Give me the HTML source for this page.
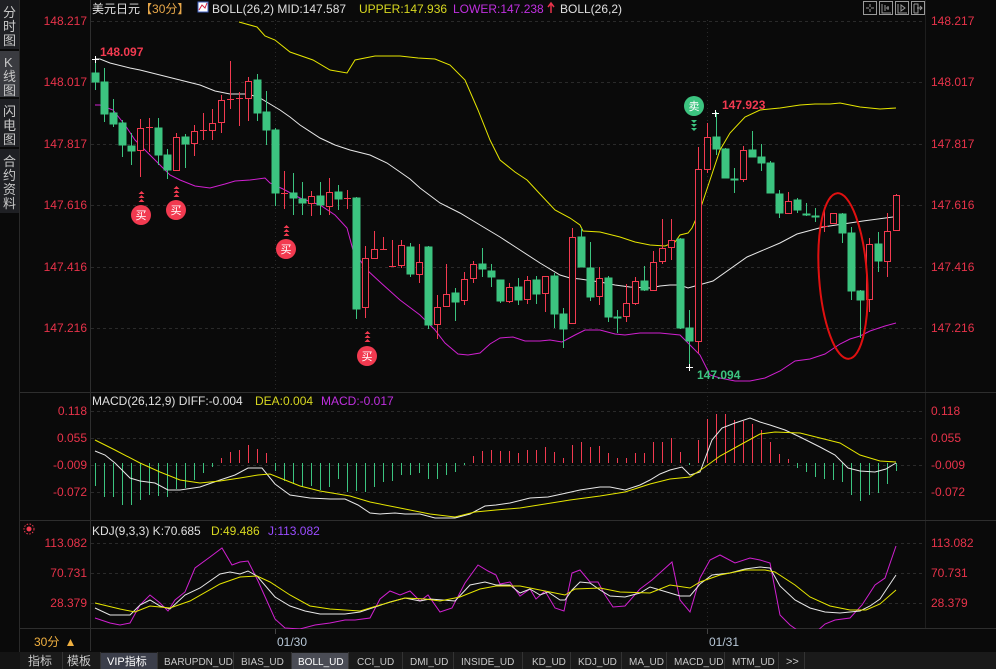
<!DOCTYPE html>
<html><head><meta charset="utf-8"><style>
html,body{margin:0;padding:0;background:#0a0a0a;width:996px;height:669px;overflow:hidden}
svg{display:block}
text{font-family:"Liberation Sans","Noto Sans CJK SC",sans-serif;font-size:12px}
.ax{fill:#e8334a}
.tab{fill:#c8c8c8;font-size:11px}
</style></head><body>
<svg width="996" height="669" viewBox="0 0 996 669" xmlns="http://www.w3.org/2000/svg">
<rect width="996" height="669" fill="#0a0a0a"/>
<!-- sidebar -->
<rect x="0" y="0" width="19" height="652" fill="#0a0a0a"/>
<rect x="0" y="0" width="19" height="49" fill="#1f2024"/>
<rect x="0" y="51" width="19" height="46" fill="#3a3b40"/>
<rect x="0" y="99" width="19" height="48" fill="#1f2024"/>
<rect x="0" y="149" width="19" height="64" fill="#1f2024"/>
<line x1="19.5" y1="0" x2="19.5" y2="652" stroke="#2a2a2a"/>
<g fill="#c8c8c8" font-size="13">
<text x="3" y="17" style="font-size:13px">分</text><text x="3" y="31" style="font-size:13px">时</text><text x="3" y="45" style="font-size:13px">图</text>
<text x="4" y="67" style="font-size:13px">K</text><text x="3" y="81" style="font-size:13px">线</text><text x="3" y="95" style="font-size:13px">图</text>
<text x="3" y="116" style="font-size:13px">闪</text><text x="3" y="130" style="font-size:13px">电</text><text x="3" y="144" style="font-size:13px">图</text>
<text x="3" y="166" style="font-size:13px">合</text><text x="3" y="180" style="font-size:13px">约</text><text x="3" y="194" style="font-size:13px">资</text><text x="3" y="208" style="font-size:13px">料</text>
</g>
<!-- frame lines -->
<line x1="90.5" y1="0" x2="90.5" y2="628" stroke="#2e2e2e"/>
<line x1="925.5" y1="0" x2="925.5" y2="628" stroke="#1e1e1e"/>
<line x1="20" y1="392.5" x2="996" y2="392.5" stroke="#2e2e2e"/>
<line x1="20" y1="520.5" x2="996" y2="520.5" stroke="#2e2e2e"/>
<line x1="20" y1="628.5" x2="996" y2="628.5" stroke="#2e2e2e"/>
<!-- grid -->
<g stroke="#2a2a2a" stroke-dasharray="3,3">
<line x1="91" y1="21.5" x2="925" y2="21.5"/><line x1="91" y1="82.5" x2="925" y2="82.5"/><line x1="91" y1="144.5" x2="925" y2="144.5"/><line x1="91" y1="205.5" x2="925" y2="205.5"/><line x1="91" y1="267.5" x2="925" y2="267.5"/><line x1="91" y1="328.5" x2="925" y2="328.5"/>
<line x1="91" y1="411.5" x2="925" y2="411.5"/><line x1="91" y1="438.5" x2="925" y2="438.5"/><line x1="91" y1="465.5" x2="925" y2="465.5"/><line x1="91" y1="492.5" x2="925" y2="492.5"/>
<line x1="91" y1="543.5" x2="925" y2="543.5"/><line x1="91" y1="573.5" x2="925" y2="573.5"/><line x1="91" y1="603.5" x2="925" y2="603.5"/>
</g>
<g stroke="#2a2a2a" stroke-dasharray="1,3">
<line x1="275.5" y1="20" x2="275.5" y2="628"/><line x1="707.5" y1="20" x2="707.5" y2="628"/>
</g>
<!-- axis labels -->
<g class="ax" text-anchor="end">
<text x="87" y="25" class="ax">148.217</text><text x="87" y="86" class="ax">148.017</text><text x="87" y="148" class="ax">147.817</text><text x="87" y="209" class="ax">147.616</text><text x="87" y="271" class="ax">147.416</text><text x="87" y="332" class="ax">147.216</text>
<text x="87" y="415" class="ax">0.118</text><text x="87" y="442" class="ax">0.055</text><text x="87" y="469" class="ax">-0.009</text><text x="87" y="496" class="ax">-0.072</text>
<text x="87" y="547" class="ax">113.082</text><text x="87" y="577" class="ax">70.731</text><text x="87" y="607" class="ax">28.379</text>
</g>
<g class="ax">
<text x="931" y="25" class="ax">148.217</text><text x="931" y="86" class="ax">148.017</text><text x="931" y="148" class="ax">147.817</text><text x="931" y="209" class="ax">147.616</text><text x="931" y="271" class="ax">147.416</text><text x="931" y="332" class="ax">147.216</text>
<text x="931" y="415" class="ax">0.118</text><text x="931" y="442" class="ax">0.055</text><text x="931" y="469" class="ax">-0.009</text><text x="931" y="496" class="ax">-0.072</text>
<text x="931" y="547" class="ax">113.082</text><text x="931" y="577" class="ax">70.731</text><text x="931" y="607" class="ax">28.379</text>
</g>
<!-- header -->
<text x="92" y="13" fill="#e0e0e0">美元日元<tspan fill="#e8a84a">【30分】</tspan></text>
<rect x="198" y="2" width="10" height="10" fill="#fff" stroke="#4060c0"/><path d="M199 10 L202 5 L205 8 L207 3" stroke="#d02040" fill="none"/>
<text x="212" y="13" fill="#e0e0e0">BOLL(26,2) MID:147.587</text>
<text x="359" y="13" fill="#d8d820">UPPER:147.936</text>
<text x="453" y="13" fill="#c030e0">LOWER:147.238</text>
<path d="M551 13 L551 4 M548 7 L551 3 L554 7" stroke="#e8334a" stroke-width="1.5" fill="none"/>
<text x="560" y="13" fill="#e0e0e0">BOLL(26,2)</text>
<g stroke="#9a9a9a" fill="none">
<rect x="863.5" y="1.5" width="13" height="13"/><rect x="879.5" y="1.5" width="13" height="13"/><rect x="895.5" y="1.5" width="13" height="13"/><rect x="911.5" y="1.5" width="13" height="13"/>
<path d="M870 4v3M870 9v3M866 8h3M871 8h3"/><path d="M882 4v9h9M885 5v6M888 6v4M886 8h3"/><path d="M898 4v9h9M901 5v6l4-3z"/><path d="M914 4v9M914 4h4v9h-4M917 8h5M920 6l2 2-2 2"/>
</g>
<!-- BOLL lines -->
<polyline fill="none" stroke="#e8e8e8" stroke-width="1" points="95,59 100,59 110,63 130,68 140,70 160,75 180,80 200,85 215,91 230,94 248,94 260,98 270,104 280,110 290,117 300,125 320,138 335,145 350,150 370,155 387,163 400,172 410,179 420,188 440,203 460,213 480,225 500,237 520,250 540,263 560,275 570,278 580,279 600,282 615,285 630,287 650,288 660,286 670,285 680,285 688,288 713,281 747,257 780,243 797,234 823,227 863,221 893,217"/>
<polyline fill="none" stroke="#e6e600" stroke-width="1" points="239,22 257,27 265,36 275,40 290,52 313,60 330,70 347,73 355,60 375,56 400,56 418,58 435,59 450,65 465,80 478,110 490,140 500,160 515,172 527,180 540,194 555,210 570,218 580,225 583,231 600,232 620,237 635,242 650,245 665,246 675,242 680,235 688,233 692,228 700,210 710,180 720,150 730,133 745,117 760,110 780,108 800,105 815,104 830,104 840,103 850,105 860,107 880,109 896,108"/>
<polyline fill="none" stroke="#d020d0" stroke-width="1" points="95,105 100,105 113,110 125,125 135,140 150,155 160,165 170,175 180,180 195,186 210,188 225,184 235,181 250,180 265,178 270,183 283,189 300,198 320,205 335,215 347,228 353,250 367,270 380,282 400,300 420,315 435,330 445,343 458,354 468,355 480,353 490,344 500,338 513,337 525,341 540,341 550,340 562,342 575,335 585,330 600,330 615,334 625,335 640,333 660,333 670,334 680,335 690,345 700,355 710,375 720,378 735,381 750,381 765,378 780,371 795,361 810,359 825,354 840,344 850,339 860,336 870,331 885,326 896,323"/>
<!-- candles -->
<g id="c" stroke-width="1">
<g stroke="#3cc480" fill="#3cc480">
<line x1="95.5" y1="59" x2="95.5" y2="90"/><rect x="92" y="73" width="7" height="9"/>
<line x1="104.5" y1="68" x2="104.5" y2="122"/><rect x="101" y="82" width="7" height="32"/>
<line x1="113.5" y1="99" x2="113.5" y2="127"/><rect x="110" y="113" width="7" height="11"/>
<line x1="122.5" y1="120" x2="122.5" y2="157"/><rect x="119" y="123" width="7" height="22"/>
<line x1="131.5" y1="133" x2="131.5" y2="165"/><rect x="128" y="146" width="7" height="5"/>
<line x1="158.5" y1="118" x2="158.5" y2="165"/><rect x="155" y="128" width="7" height="27"/>
<line x1="167.5" y1="149" x2="167.5" y2="179"/><rect x="164" y="155" width="7" height="15"/>
<line x1="185.5" y1="134" x2="185.5" y2="168"/><rect x="182" y="137" width="7" height="7"/>
<line x1="257.5" y1="74" x2="257.5" y2="121"/><rect x="254" y="80" width="7" height="33"/>
<line x1="266.5" y1="91" x2="266.5" y2="145"/><rect x="263" y="112" width="7" height="18"/>
<line x1="275.5" y1="128" x2="275.5" y2="206"/><rect x="272" y="130" width="7" height="63"/>
<line x1="293.5" y1="173" x2="293.5" y2="215"/><rect x="290" y="193" width="7" height="5"/>
<line x1="302.5" y1="182" x2="302.5" y2="215"/><rect x="299" y="199" width="7" height="4"/>
<line x1="320.5" y1="182" x2="320.5" y2="215"/><rect x="317" y="196" width="7" height="9"/>
<line x1="338.5" y1="185" x2="338.5" y2="210"/><rect x="335" y="192" width="7" height="7"/>
<line x1="356.5" y1="197" x2="356.5" y2="319"/><rect x="353" y="198" width="7" height="111"/>
<line x1="410.5" y1="243" x2="410.5" y2="277"/><rect x="407" y="247" width="7" height="27"/>
<line x1="428.5" y1="246" x2="428.5" y2="329"/><rect x="425" y="247" width="7" height="78"/>
<line x1="455.5" y1="288" x2="455.5" y2="321"/><rect x="452" y="293" width="7" height="9"/>
<line x1="482.5" y1="248" x2="482.5" y2="277"/><rect x="479" y="264" width="7" height="5"/>
<line x1="491.5" y1="264" x2="491.5" y2="287"/><rect x="488" y="271" width="7" height="6"/>
<line x1="500.5" y1="280" x2="500.5" y2="303"/><rect x="497" y="280" width="7" height="21"/>
<line x1="518.5" y1="278" x2="518.5" y2="305"/><rect x="515" y="287" width="7" height="13"/>
<line x1="536.5" y1="276" x2="536.5" y2="304"/><rect x="533" y="280" width="7" height="14"/>
<line x1="554.5" y1="273" x2="554.5" y2="328"/><rect x="551" y="276" width="7" height="38"/>
<line x1="563.5" y1="308" x2="563.5" y2="348"/><rect x="560" y="314" width="7" height="15"/>
<line x1="581.5" y1="228" x2="581.5" y2="267"/><rect x="578" y="237" width="7" height="30"/>
<line x1="590.5" y1="242" x2="590.5" y2="301"/><rect x="587" y="268" width="7" height="29"/>
<line x1="608.5" y1="276" x2="608.5" y2="322"/><rect x="605" y="278" width="7" height="39"/>
<line x1="617.5" y1="310" x2="617.5" y2="333"/><rect x="614" y="317" width="7" height="1"/>
<line x1="644.5" y1="266" x2="644.5" y2="291"/><rect x="641" y="281" width="7" height="9"/>
<line x1="680.5" y1="238" x2="680.5" y2="329"/><rect x="677" y="239" width="7" height="89"/>
<line x1="689.5" y1="310" x2="689.5" y2="367"/><rect x="686" y="328" width="7" height="13"/>
<line x1="716.5" y1="112" x2="716.5" y2="155"/><rect x="713" y="137" width="7" height="12"/>
<line x1="725.5" y1="148" x2="725.5" y2="178"/><rect x="722" y="149" width="7" height="29"/>
<line x1="734.5" y1="168" x2="734.5" y2="193"/><rect x="731" y="179" width="7" height="1"/>
<line x1="752.5" y1="131" x2="752.5" y2="157"/><rect x="749" y="150" width="7" height="7"/>
<line x1="761.5" y1="144" x2="761.5" y2="171"/><rect x="758" y="157" width="7" height="6"/>
<line x1="770.5" y1="161" x2="770.5" y2="193"/><rect x="767" y="163" width="7" height="30"/>
<line x1="779.5" y1="190" x2="779.5" y2="218"/><rect x="776" y="194" width="7" height="19"/>
<line x1="797.5" y1="198" x2="797.5" y2="213"/><rect x="794" y="200" width="7" height="10"/>
<line x1="806.5" y1="203" x2="806.5" y2="216"/><rect x="803" y="214" width="7" height="1"/>
<line x1="815.5" y1="208" x2="815.5" y2="222"/><rect x="812" y="216" width="7" height="1"/>
<line x1="842.5" y1="213" x2="842.5" y2="243"/><rect x="839" y="214" width="7" height="19"/>
<line x1="851.5" y1="227" x2="851.5" y2="300"/><rect x="848" y="233" width="7" height="58"/>
<line x1="860.5" y1="290" x2="860.5" y2="338"/><rect x="857" y="291" width="7" height="9"/>
<line x1="878.5" y1="232" x2="878.5" y2="272"/><rect x="875" y="244" width="7" height="17"/>
</g>
<g stroke="#f23a50" fill="#0a0a0a">
<line x1="140.5" y1="119" x2="140.5" y2="177"/><rect x="137.5" y="128.5" width="6" height="22"/>
<line x1="149.5" y1="118" x2="149.5" y2="152"/><line x1="146" y1="127.5" x2="153" y2="127.5"/>
<line x1="176.5" y1="133" x2="176.5" y2="171"/><rect x="173.5" y="137.5" width="6" height="33"/>
<line x1="194.5" y1="125" x2="194.5" y2="156"/><rect x="191.5" y="131.5" width="6" height="12"/>
<line x1="203.5" y1="113" x2="203.5" y2="140"/><line x1="200" y1="130.5" x2="207" y2="130.5"/>
<line x1="212.5" y1="109" x2="212.5" y2="140"/><rect x="209.5" y="123.5" width="6" height="7"/>
<line x1="221.5" y1="95" x2="221.5" y2="133"/><rect x="218.5" y="100.5" width="6" height="22"/>
<line x1="230.5" y1="61" x2="230.5" y2="109"/><line x1="227" y1="99.5" x2="234" y2="99.5"/>
<line x1="239.5" y1="92" x2="239.5" y2="126"/><line x1="236" y1="98.5" x2="243" y2="98.5"/>
<line x1="248.5" y1="77" x2="248.5" y2="121"/><rect x="245.5" y="81.5" width="6" height="17"/>
<line x1="284.5" y1="171" x2="284.5" y2="209"/><line x1="281" y1="193.5" x2="288" y2="193.5"/>
<line x1="311.5" y1="191" x2="311.5" y2="216"/><rect x="308.5" y="196.5" width="6" height="7"/>
<line x1="329.5" y1="178" x2="329.5" y2="215"/><rect x="326.5" y="192.5" width="6" height="14"/>
<line x1="347.5" y1="190" x2="347.5" y2="209"/><line x1="344" y1="198.5" x2="351" y2="198.5"/>
<line x1="365.5" y1="246" x2="365.5" y2="318"/><rect x="362.5" y="258.5" width="6" height="49"/>
<line x1="374.5" y1="231" x2="374.5" y2="258"/><rect x="371.5" y="249.5" width="6" height="9"/>
<line x1="383.5" y1="237" x2="383.5" y2="249"/><line x1="380" y1="249.5" x2="387" y2="249.5"/>
<line x1="392.5" y1="240" x2="392.5" y2="266"/><line x1="389" y1="266.5" x2="396" y2="266.5"/>
<line x1="401.5" y1="240" x2="401.5" y2="268"/><rect x="398.5" y="245.5" width="6" height="20"/>
<line x1="419.5" y1="244" x2="419.5" y2="283"/><rect x="416.5" y="262.5" width="6" height="12"/>
<line x1="437.5" y1="295" x2="437.5" y2="339"/><rect x="434.5" y="307.5" width="6" height="17"/>
<line x1="446.5" y1="264" x2="446.5" y2="306"/><rect x="443.5" y="294.5" width="6" height="12"/>
<line x1="464.5" y1="272" x2="464.5" y2="305"/><rect x="461.5" y="279.5" width="6" height="21"/>
<line x1="473.5" y1="261" x2="473.5" y2="283"/><rect x="470.5" y="264.5" width="6" height="14"/>
<line x1="509.5" y1="283" x2="509.5" y2="303"/><rect x="506.5" y="287.5" width="6" height="14"/>
<line x1="527.5" y1="276" x2="527.5" y2="304"/><rect x="524.5" y="280.5" width="6" height="19"/>
<line x1="545.5" y1="276" x2="545.5" y2="312"/><rect x="542.5" y="276.5" width="6" height="17"/>
<line x1="572.5" y1="228" x2="572.5" y2="323"/><rect x="569.5" y="237.5" width="6" height="86"/>
<line x1="599.5" y1="267" x2="599.5" y2="305"/><rect x="596.5" y="278.5" width="6" height="18"/>
<line x1="626.5" y1="284" x2="626.5" y2="322"/><rect x="623.5" y="303.5" width="6" height="13"/>
<line x1="635.5" y1="277" x2="635.5" y2="305"/><rect x="632.5" y="281.5" width="6" height="22"/>
<line x1="653.5" y1="251" x2="653.5" y2="291"/><rect x="650.5" y="262.5" width="6" height="28"/>
<line x1="662.5" y1="219" x2="662.5" y2="264"/><rect x="659.5" y="248.5" width="6" height="13"/>
<line x1="671.5" y1="219" x2="671.5" y2="260"/><rect x="668.5" y="240.5" width="6" height="7"/>
<line x1="698.5" y1="147" x2="698.5" y2="353"/><rect x="695.5" y="169.5" width="6" height="172"/>
<line x1="707.5" y1="123" x2="707.5" y2="173"/><rect x="704.5" y="137.5" width="6" height="32"/>
<line x1="743.5" y1="146" x2="743.5" y2="182"/><rect x="740.5" y="150.5" width="6" height="29"/>
<line x1="788.5" y1="192" x2="788.5" y2="213"/><rect x="785.5" y="201.5" width="6" height="12"/>
<line x1="824.5" y1="208" x2="824.5" y2="232"/><line x1="821" y1="226.5" x2="828" y2="226.5"/>
<rect x="830.5" y="213.5" width="6" height="10"/>
<line x1="869.5" y1="238" x2="869.5" y2="312"/><rect x="866.5" y="244.5" width="6" height="55"/>
<line x1="887.5" y1="213" x2="887.5" y2="277"/><rect x="884.5" y="231.5" width="6" height="30"/>
<line x1="896.5" y1="194" x2="896.5" y2="230"/><rect x="893.5" y="195.5" width="6" height="35"/>
</g>
</g>
<!-- extremes -->
<path d="M92 59.5h7M95.5 56v7" stroke="#fff"/>
<text x="100" y="56" fill="#f23a50" style="font-weight:bold">148.097</text>
<path d="M712 113.5h7M715.5 110v7" stroke="#fff"/>
<text x="722" y="109" fill="#f23a50" style="font-weight:bold">147.923</text>
<path d="M686 367.5h7M689.5 364v7" stroke="#fff"/>
<text x="697" y="379" fill="#3cc480" style="font-weight:bold">147.094</text>
<!-- buy/sell markers -->
<g fill="#f23a50">
<path d="M138.5 194l3-3 3 3zM138.5 198l3-3 3 3zM138.5 202l3-3 3 3z"/><circle cx="141" cy="215" r="10"/>
<path d="M173.5 189l3-3 3 3zM173.5 193l3-3 3 3zM173.5 197l3-3 3 3z"/><circle cx="176" cy="210" r="10"/>
<path d="M283.5 228l3-3 3 3zM283.5 232l3-3 3 3zM283.5 236l3-3 3 3z"/><circle cx="286" cy="249" r="10"/>
<path d="M364.5 334l3-3 3 3zM364.5 338l3-3 3 3zM364.5 342l3-3 3 3z"/><circle cx="367" cy="356" r="10"/>
</g>
<g fill="#fff" text-anchor="middle"><text x="141" y="219" style="font-size:11px">买</text><text x="176" y="214" style="font-size:11px">买</text><text x="286" y="253" style="font-size:11px">买</text><text x="367" y="360" style="font-size:11px">买</text></g>
<circle cx="694" cy="106" r="10" fill="#3cc480"/><text x="694" y="110" fill="#fff" text-anchor="middle" style="font-size:11px">卖</text>
<path d="M691 120l3 3 3-3zM691 124l3 3 3-3zM691 128l3 3 3-3z" fill="#3cc480"/>
<ellipse cx="843" cy="276" rx="24" ry="83" fill="none" stroke="#e01010" stroke-width="2" transform="rotate(-4 843 276)"/>
<!-- MACD -->
<text x="92" y="405" fill="#e0e0e0">MACD(26,12,9) DIFF:-0.004</text>
<text x="255" y="405" fill="#d8d820">DEA:0.004</text>
<text x="321" y="405" fill="#c030e0">MACD:-0.017</text>
<g stroke="#3cc480">
<path d="M95.5 463V486M104.5 463V497M113.5 463V497M122.5 463V505M131.5 463V505M140.5 463V500M149.5 463V495M158.5 463V496M167.5 463V497M176.5 463V489M185.5 463V488M194.5 463V480M203.5 463V473M212.5 463V467"/>
<path d="M275.5 463V471M284.5 463V481M293.5 463V484M302.5 463V487M311.5 463V486M320.5 463V490M329.5 463V487M338.5 463V479M347.5 463V492M356.5 463V491M365.5 463V492M374.5 463V487M383.5 463V482M392.5 463V481M401.5 463V475M410.5 463V475M419.5 463V473M428.5 463V479M437.5 463V479M446.5 463V475M455.5 463V472M464.5 463V465"/>
<path d="M689.5 463V465M797.5 463V468M806.5 463V472M815.5 463V477M824.5 463V479M833.5 463V480M842.5 463V482M851.5 463V495M860.5 463V501M869.5 463V495M878.5 463V493M887.5 463V484M896.5 463V471"/>
</g>
<g stroke="#f23a50">
<path d="M221.5 463V458M230.5 463V452M239.5 463V450M248.5 463V445M257.5 463V449M266.5 463V453"/>
<path d="M473.5 463V456M482.5 463V451M491.5 463V450M500.5 463V451M509.5 463V451M518.5 463V453M527.5 463V450M536.5 463V450M545.5 463V447M554.5 463V452M563.5 463V458M572.5 463V445M581.5 463V442M590.5 463V447M599.5 463V446M608.5 463V453M617.5 463V458M626.5 463V458M635.5 463V453M644.5 463V453M653.5 463V442M662.5 463V442M671.5 463V438M680.5 463V452M698.5 463V440M707.5 463V419M716.5 463V414M725.5 463V414M734.5 463V420M743.5 463V421M752.5 463V424M761.5 463V430M770.5 463V442M779.5 463V454M788.5 463V459"/>
</g>
<polyline fill="none" stroke="#e8e8e8" points="95,451 105,455 115,463 130,478 140,481 155,483 168,490 180,490 200,487 220,480 235,475 248,468 262,468 275,484 290,495 310,498 330,499 345,499 358,505 370,513 380,514 395,513 405,514 420,514 435,518 455,518 470,514 485,506 496,505 510,503 530,498 548,497 562,494 580,490 600,487 610,487 625,490 640,485 650,480 660,474 670,470 682,467 690,475 700,472 712,440 722,428 735,423 750,418 760,422 770,425 785,430 800,437 820,447 835,455 848,468 860,471 875,472 886,469 896,463"/>
<polyline fill="none" stroke="#e6e600" points="95,440 115,450 140,463 160,472 180,480 200,483 220,481 240,478 258,475 270,474 285,480 300,486 320,491 350,496 370,502 400,508 430,514 455,517 475,512 496,510 520,508 545,504 570,500 600,496 625,492 650,484 670,479 690,477 705,467 720,456 740,445 760,434 775,432 800,433 820,438 840,443 860,455 880,461 896,462"/>
<!-- KDJ -->
<circle cx="29" cy="529" r="2.5" fill="#f23a50"/><circle cx="29" cy="529" r="5" fill="none" stroke="#f23a50" stroke-dasharray="1.5,1.5"/>
<text x="92" y="535" fill="#e0e0e0">KDJ(9,3,3) K:70.685</text>
<text x="211" y="535" fill="#d8d820">D:49.486</text>
<text x="268" y="535" fill="#9a4cff">J:113.082</text>
<polyline fill="none" stroke="#d020d0" points="95,618 110,623 120,625 130,623 140,605 150,595 160,603 168,611 175,600 185,592 195,568 210,557 222,548 232,565 240,562 248,561 258,581 275,619 285,628 300,629 315,625 330,623 345,620 355,620 370,618 380,599 390,591 400,595 410,591 420,601 428,595 440,612 452,608 465,583 478,565 488,571 496,575 500,584 510,582 520,596 530,589 536,599 545,591 555,608 564,611 572,573 580,570 590,582 598,582 605,595 613,607 625,606 640,589 652,580 672,562 680,600 690,612 700,578 710,560 720,555 735,563 750,558 760,560 770,563 780,615 790,625 800,632 815,633 825,624 835,620 850,618 862,605 875,585 885,578 896,546"/>
<polyline fill="none" stroke="#e8e8e8" points="95,608 110,615 130,615 140,605 150,600 160,606 170,609 185,595 200,588 220,574 230,572 240,574 248,571 257,576 275,597 290,606 305,611 320,614 345,614 360,612 375,607 390,602 405,598 420,601 430,599 455,601 470,585 485,582 496,585 510,585 520,593 530,589 540,595 548,592 560,600 565,600 572,590 580,582 590,583 600,590 610,596 625,597 640,593 650,587 660,590 680,596 690,596 700,584 712,575 730,573 745,569 760,567 770,568 780,586 795,600 810,608 825,612 840,613 860,611 870,606 880,599 896,575"/>
<polyline fill="none" stroke="#e6e600" points="95,603 120,609 135,612 150,606 170,608 190,601 220,584 240,577 257,576 270,582 290,595 310,606 330,609 360,611 380,605 405,598 425,599 440,601 460,597 480,589 496,586 520,586 545,591 565,595 575,589 600,588 620,592 650,593 670,585 690,588 700,582 720,575 745,570 765,570 775,572 795,585 810,597 830,606 850,610 866,610 880,604 896,590"/>
<rect x="91" y="629" width="905" height="22" fill="#0a0a0a"/>
<!-- time axis -->
<rect x="20" y="629" width="70" height="22" fill="#0a0a0a"/>
<line x1="90.5" y1="628" x2="90.5" y2="651" stroke="#2e2e2e"/>
<text x="34" y="646" fill="#f0b040" style="font-size:12px">30分</text><path d="M67 646l3.5-7 3.5 7z" fill="#f0b040"/>
<line x1="275.5" y1="629" x2="275.5" y2="634" stroke="#444"/><line x1="707.5" y1="629" x2="707.5" y2="634" stroke="#444"/>
<text x="277" y="646" fill="#b8c8d8" style="font-size:12px">01/30</text>
<text x="709" y="646" fill="#b8c8d8" style="font-size:12px">01/31</text>
<!-- tab bar -->
<rect x="0" y="652" width="996" height="17" fill="#141414"/>
<rect x="20" y="652" width="976" height="17" fill="#1a1a1a"/>
<rect x="100" y="653" width="57" height="16" fill="#3b3e4a"/>
<rect x="291" y="653" width="57" height="16" fill="#4a4c55"/>
<g stroke="#333"><path d="M62.5 652v17M100.5 652v17M157.5 652v17M233.5 652v17M291.5 652v17M348.5 652v17M402.5 652v17M453.5 652v17M522.5 652v17M570.5 652v17M621.5 652v17M666.5 652v17M724.5 652v17M778.5 652v17M804.5 652v17"/></g>
<g class="tab">
<text x="28" y="665" class="tab" style="font-size:12px">指标</text>
<text x="67" y="665" class="tab" style="font-size:12px">模板</text>
<text x="107" y="665" class="tab" style="fill:#fff">VIP指标</text>
<text x="164" y="665" class="tab" style="font-size:10px">BARUPDN_UD</text>
<text x="241" y="665" class="tab" style="font-size:10px">BIAS_UD</text>
<text x="298" y="665" class="tab" style="font-size:10px;fill:#fff">BOLL_UD</text>
<text x="357" y="665" class="tab" style="font-size:10px">CCI_UD</text>
<text x="410" y="665" class="tab" style="font-size:10px">DMI_UD</text>
<text x="461" y="665" class="tab" style="font-size:10px">INSIDE_UD</text>
<text x="532" y="665" class="tab" style="font-size:10px">KD_UD</text>
<text x="578" y="665" class="tab" style="font-size:10px">KDJ_UD</text>
<text x="629" y="665" class="tab" style="font-size:10px">MA_UD</text>
<text x="674" y="665" class="tab" style="font-size:10px">MACD_UD</text>
<text x="732" y="665" class="tab" style="font-size:10px">MTM_UD</text>
<text x="786" y="665" class="tab" style="font-size:11px">&gt;&gt;</text>
</g>
</svg>
</body></html>
